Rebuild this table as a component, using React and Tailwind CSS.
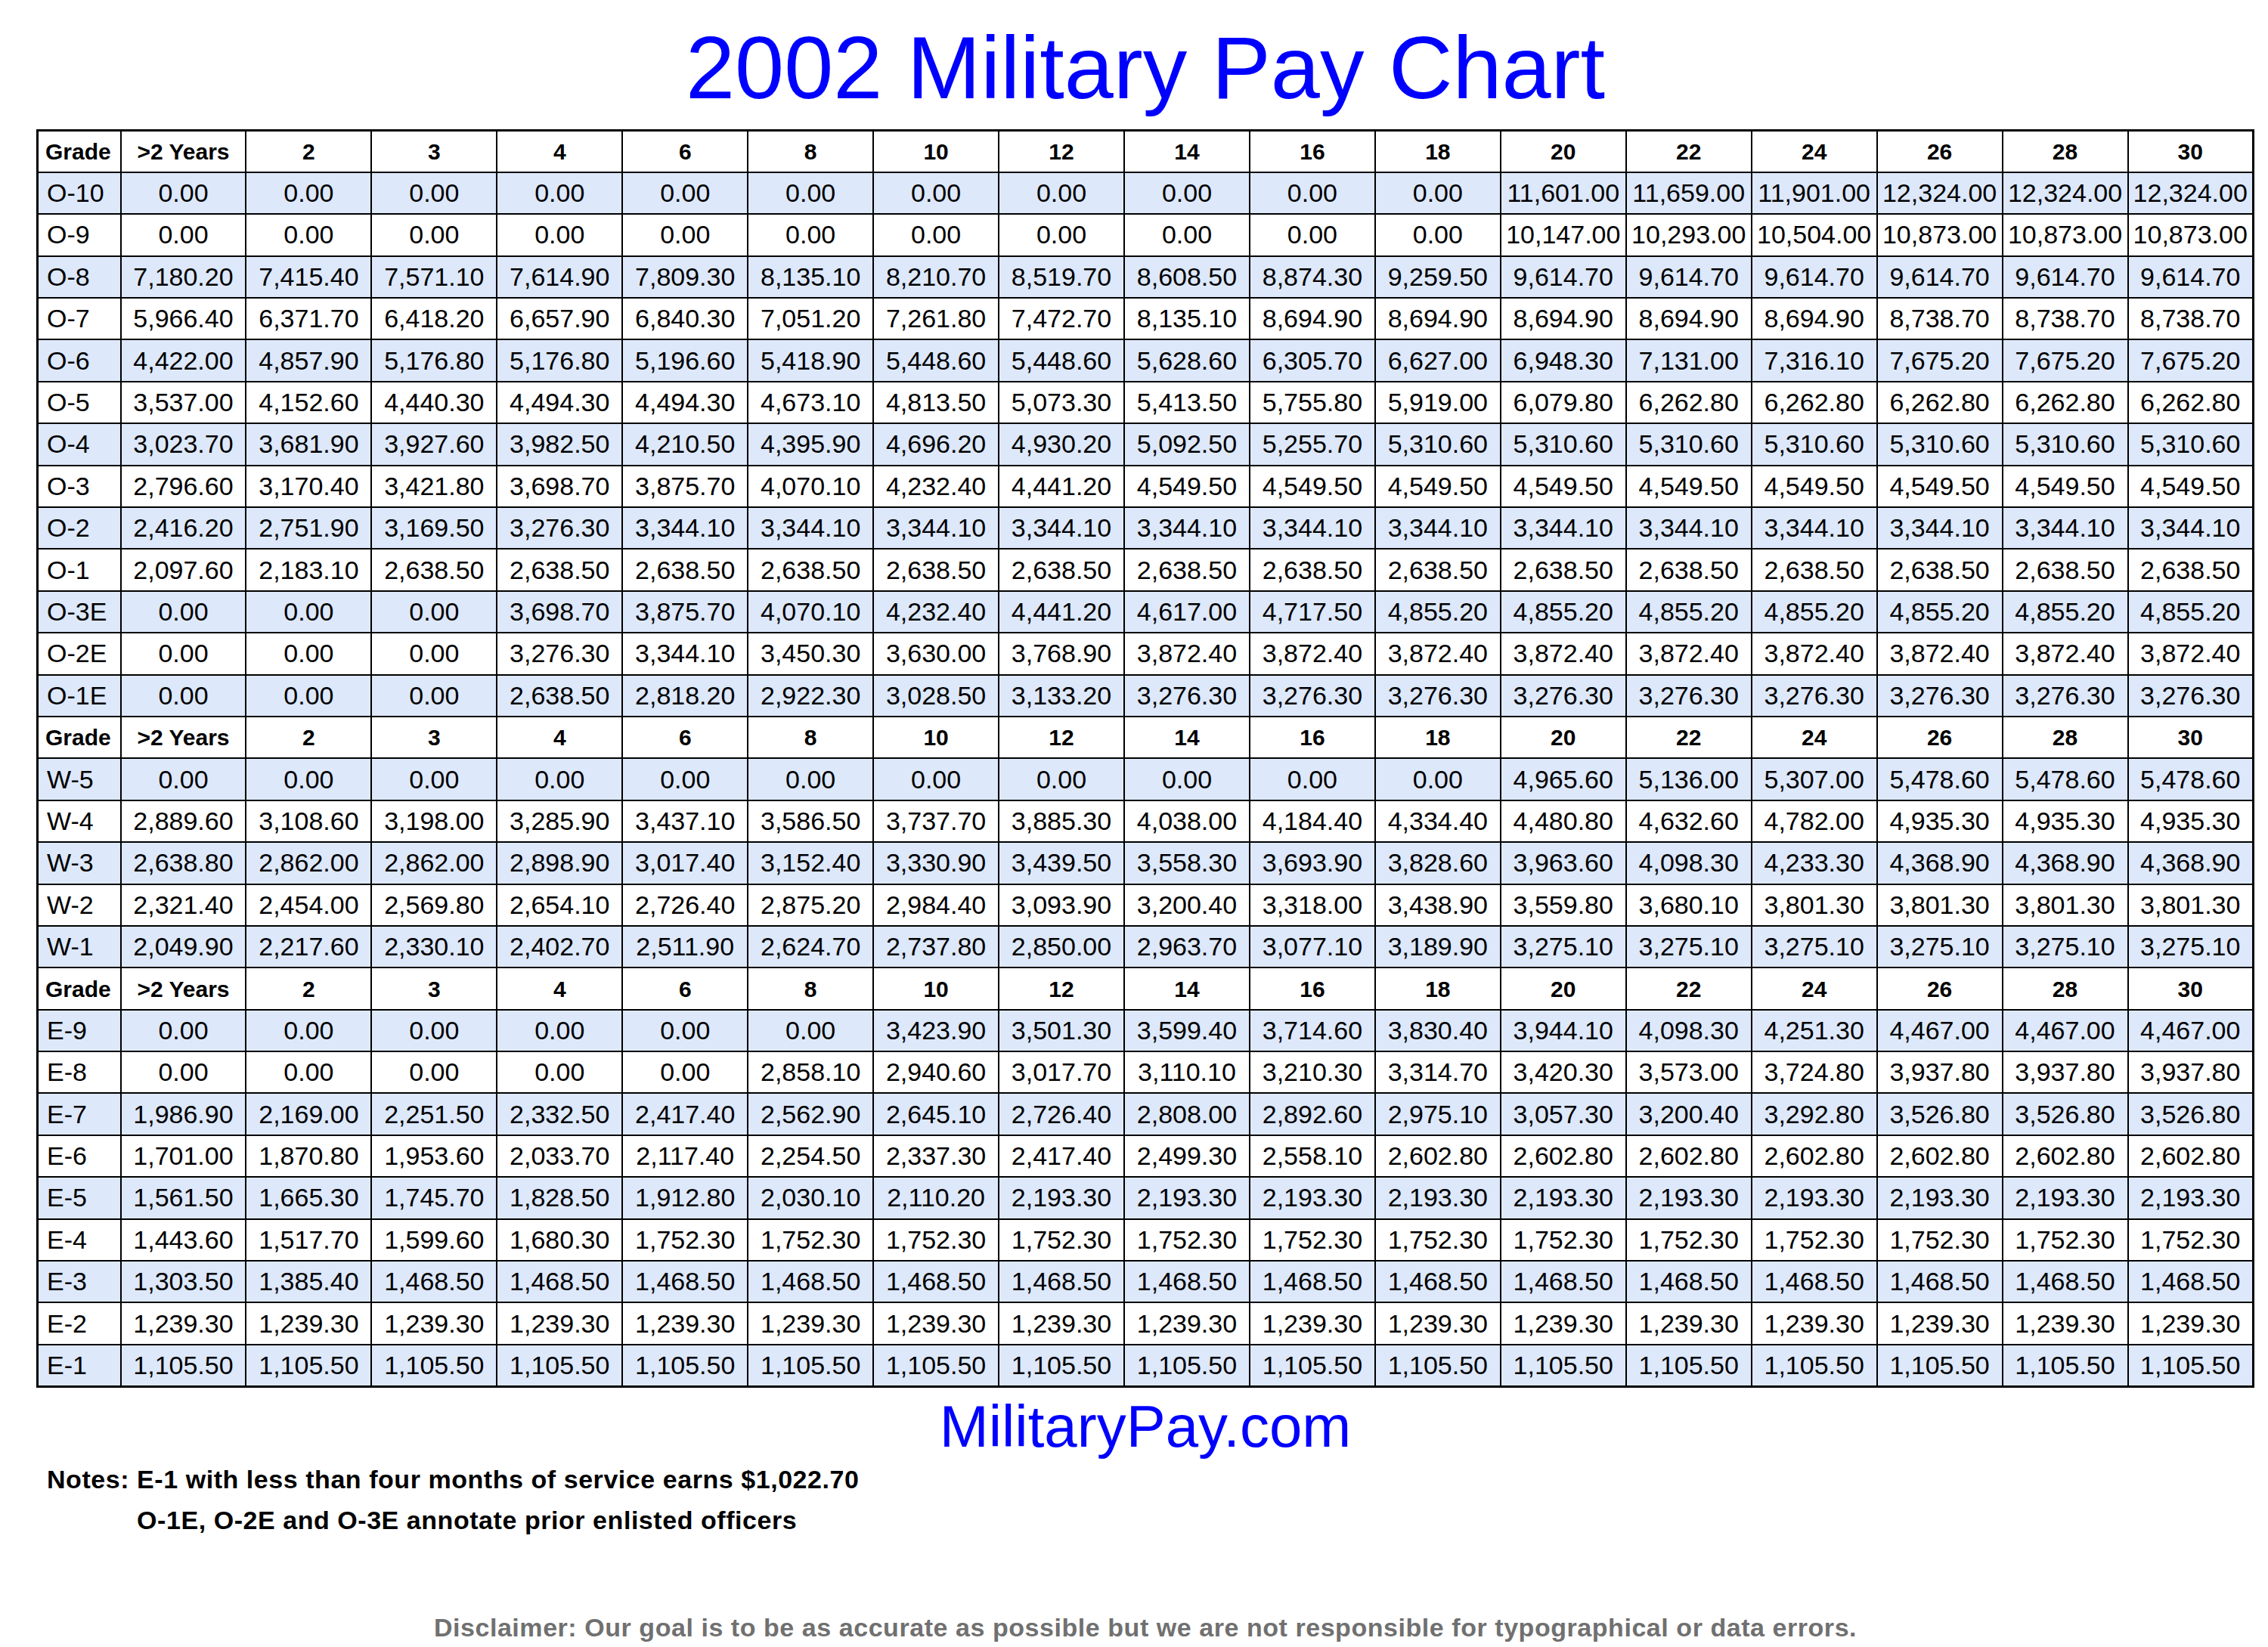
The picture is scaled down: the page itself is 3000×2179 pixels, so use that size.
import React from "react";

const rep = (v, n) => Array(n).fill(v);

const HEAD = ["Grade", ">2 Years", "2", "3", "4", "6", "8", "10", "12", "14", "16", "18", "20", "22", "24", "26", "28", "30"];

const officers = [
  ["O-10", [...rep("0.00", 11), "11,601.00", "11,659.00", "11,901.00", "12,324.00", "12,324.00", "12,324.00"]],
  ["O-9", [...rep("0.00", 11), "10,147.00", "10,293.00", "10,504.00", "10,873.00", "10,873.00", "10,873.00"]],
  ["O-8", ["7,180.20", "7,415.40", "7,571.10", "7,614.90", "7,809.30", "8,135.10", "8,210.70", "8,519.70", "8,608.50", "8,874.30", "9,259.50", ...rep("9,614.70", 6)]],
  ["O-7", ["5,966.40", "6,371.70", "6,418.20", "6,657.90", "6,840.30", "7,051.20", "7,261.80", "7,472.70", "8,135.10", ...rep("8,694.90", 5), ...rep("8,738.70", 3)]],
  ["O-6", ["4,422.00", "4,857.90", "5,176.80", "5,176.80", "5,196.60", "5,418.90", "5,448.60", "5,448.60", "5,628.60", "6,305.70", "6,627.00", "6,948.30", "7,131.00", "7,316.10", ...rep("7,675.20", 3)]],
  ["O-5", ["3,537.00", "4,152.60", "4,440.30", "4,494.30", "4,494.30", "4,673.10", "4,813.50", "5,073.30", "5,413.50", "5,755.80", "5,919.00", "6,079.80", ...rep("6,262.80", 5)]],
  ["O-4", ["3,023.70", "3,681.90", "3,927.60", "3,982.50", "4,210.50", "4,395.90", "4,696.20", "4,930.20", "5,092.50", "5,255.70", ...rep("5,310.60", 7)]],
  ["O-3", ["2,796.60", "3,170.40", "3,421.80", "3,698.70", "3,875.70", "4,070.10", "4,232.40", "4,441.20", ...rep("4,549.50", 9)]],
  ["O-2", ["2,416.20", "2,751.90", "3,169.50", "3,276.30", ...rep("3,344.10", 13)]],
  ["O-1", ["2,097.60", "2,183.10", ...rep("2,638.50", 15)]],
  ["O-3E", [...rep("0.00", 3), "3,698.70", "3,875.70", "4,070.10", "4,232.40", "4,441.20", "4,617.00", "4,717.50", ...rep("4,855.20", 7)]],
  ["O-2E", [...rep("0.00", 3), "3,276.30", "3,344.10", "3,450.30", "3,630.00", "3,768.90", ...rep("3,872.40", 9)]],
  ["O-1E", [...rep("0.00", 3), "2,638.50", "2,818.20", "2,922.30", "3,028.50", "3,133.20", ...rep("3,276.30", 9)]],
];

const warrant = [
  ["W-5", [...rep("0.00", 11), "4,965.60", "5,136.00", "5,307.00", ...rep("5,478.60", 3)]],
  ["W-4", ["2,889.60", "3,108.60", "3,198.00", "3,285.90", "3,437.10", "3,586.50", "3,737.70", "3,885.30", "4,038.00", "4,184.40", "4,334.40", "4,480.80", "4,632.60", "4,782.00", ...rep("4,935.30", 3)]],
  ["W-3", ["2,638.80", "2,862.00", "2,862.00", "2,898.90", "3,017.40", "3,152.40", "3,330.90", "3,439.50", "3,558.30", "3,693.90", "3,828.60", "3,963.60", "4,098.30", "4,233.30", ...rep("4,368.90", 3)]],
  ["W-2", ["2,321.40", "2,454.00", "2,569.80", "2,654.10", "2,726.40", "2,875.20", "2,984.40", "3,093.90", "3,200.40", "3,318.00", "3,438.90", "3,559.80", "3,680.10", ...rep("3,801.30", 4)]],
  ["W-1", ["2,049.90", "2,217.60", "2,330.10", "2,402.70", "2,511.90", "2,624.70", "2,737.80", "2,850.00", "2,963.70", "3,077.10", "3,189.90", ...rep("3,275.10", 6)]],
];

const enlisted = [
  ["E-9", [...rep("0.00", 6), "3,423.90", "3,501.30", "3,599.40", "3,714.60", "3,830.40", "3,944.10", "4,098.30", "4,251.30", ...rep("4,467.00", 3)]],
  ["E-8", [...rep("0.00", 5), "2,858.10", "2,940.60", "3,017.70", "3,110.10", "3,210.30", "3,314.70", "3,420.30", "3,573.00", "3,724.80", ...rep("3,937.80", 3)]],
  ["E-7", ["1,986.90", "2,169.00", "2,251.50", "2,332.50", "2,417.40", "2,562.90", "2,645.10", "2,726.40", "2,808.00", "2,892.60", "2,975.10", "3,057.30", "3,200.40", "3,292.80", ...rep("3,526.80", 3)]],
  ["E-6", ["1,701.00", "1,870.80", "1,953.60", "2,033.70", "2,117.40", "2,254.50", "2,337.30", "2,417.40", "2,499.30", "2,558.10", ...rep("2,602.80", 7)]],
  ["E-5", ["1,561.50", "1,665.30", "1,745.70", "1,828.50", "1,912.80", "2,030.10", "2,110.20", ...rep("2,193.30", 10)]],
  ["E-4", ["1,443.60", "1,517.70", "1,599.60", "1,680.30", ...rep("1,752.30", 13)]],
  ["E-3", ["1,303.50", "1,385.40", ...rep("1,468.50", 15)]],
  ["E-2", rep("1,239.30", 17)],
  ["E-1", rep("1,105.50", 17)],
];

const HeaderRow = () => (
  <tr className="h-[55.4px] bg-white">
    {HEAD.map((h, i) => (
      <th
        key={i}
        className={`border-2 border-black p-0 text-[30px] font-bold text-black ${
          i === 0 ? "text-left pl-[9px]" : "text-center"
        }`}
      >
        {h}
      </th>
    ))}
  </tr>
);

const Section = ({ rows }) => (
  <>
    <HeaderRow />
    {rows.map(([grade, vals], r) => (
      <tr key={grade} className={`h-[55.4px] ${r % 2 === 0 ? "bg-[#dde8fb]" : "bg-white"}`}>
        <td className="border-2 border-black p-0 pl-[11px] text-left text-[34px] text-black">{grade}</td>
        {vals.map((v, i) => (
          <td key={i} className="border-2 border-black p-0 text-center text-[34px] text-black whitespace-nowrap">
            {v}
          </td>
        ))}
      </tr>
    ))}
  </>
);

export default function App() {
  return (
    <div className="w-[3000px] min-h-[2179px] bg-white font-['Liberation_Sans',Arial,sans-serif]">
      <div className="ml-[48px] w-[2934px]">
        <h1 className="pt-[31px] text-center text-[117px] font-normal leading-none text-[#0000ff]">
          2002 Military Pay Chart
        </h1>

        <table className="mt-[23px] w-[2934px] table-fixed border-collapse border-[3px] border-black">
          <colgroup>
            <col className="w-[110px]" />
            {HEAD.slice(1).map((h) => (
              <col key={h} />
            ))}
          </colgroup>
          <tbody>
            <Section rows={officers} />
            <Section rows={warrant} />
            <Section rows={enlisted} />
          </tbody>
        </table>

        <p className="mt-[12px] text-center text-[78px] leading-none text-[#0000ff]">MilitaryPay.com</p>
      </div>

      {/* Notes */}
      <div className="ml-[62px] mt-[4px] flex gap-[10px] text-[34px] font-bold leading-[54px] tracking-[0.55px] text-black">
        <span>Notes:</span>
        <div className="flex flex-col">
          <span>E-1 with less than four months of service earns $1,022.70</span>
          <span>O-1E, O-2E and O-3E annotate prior enlisted officers</span>
        </div>
      </div>

      <p className="ml-[48px] mt-[98px] w-[2934px] text-center text-[34px] font-bold leading-none tracking-[0.55px] text-[#707070]">
        Disclaimer: Our goal is to be as accurate as possible but we are not responsible for typographical or data errors.
      </p>
    </div>
  );
}
